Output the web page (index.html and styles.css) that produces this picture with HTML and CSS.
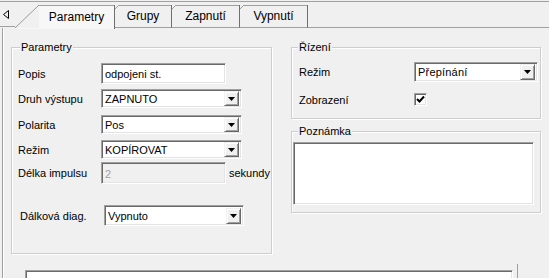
FILE: index.html
```html
<!DOCTYPE html>
<html lang="cs">
<head>
<meta charset="UTF-8">
<title>Parametry výstupu</title>
<link rel="stylesheet" href="styles.css">
</head>
<body>
    <div class="tabbar">
        <div class="tab-scroll">
            <svg width="6" height="9" viewBox="0 0 6 9"><path d="M5.5 0.5 L0.5 4.5 L5.5 8.5 Z" fill="none" stroke="#000"/></svg>
        </div>
        <div class="tab active">
            <svg class="slant" width="24" height="23" viewBox="0 0 24 23"><path d="M0 23 L24 0" stroke="#9a9a9a" fill="none"/></svg>
            <span class="tab-label">Parametry</span>
        </div>
        <div class="tab tab-grupy">Grupy</div>
        <div class="tab tab-zap">Zapnutí</div>
        <div class="tab tab-vyp">Vypnutí</div>
        <div class="tab-fill"></div>
    </div>

    <div class="page">
        <div class="columns">
            <div class="group group-params">
                <div class="group-title">Parametry</div>
                <div class="row row-popis">
                    <label>Popis</label>
                    <div class="edit edit-popis">odpojeni st.</div>
                </div>
                <div class="row row-druh">
                    <label>Druh výstupu</label>
                    <div class="combo combo-left">ZAPNUTO<span class="drop"><svg width="7" height="4" viewBox="0 0 7 4"><path d="M0 0 H7 L3.5 4 Z" fill="#000"/></svg></span></div>
                </div>
                <div class="row row-polarita">
                    <label>Polarita</label>
                    <div class="combo combo-left">Pos<span class="drop"><svg width="7" height="4" viewBox="0 0 7 4"><path d="M0 0 H7 L3.5 4 Z" fill="#000"/></svg></span></div>
                </div>
                <div class="row row-rezim">
                    <label>Režim</label>
                    <div class="combo combo-left">KOPÍROVAT<span class="drop"><svg width="7" height="4" viewBox="0 0 7 4"><path d="M0 0 H7 L3.5 4 Z" fill="#000"/></svg></span></div>
                </div>
                <div class="row row-delka">
                    <label>Délka impulsu</label>
                    <div class="edit edit-disabled">2</div>
                    <span class="unit">sekundy</span>
                </div>
                <div class="row row-diag">
                    <label>Dálková diag.</label>
                    <div class="combo combo-diag">Vypnuto<span class="drop"><svg width="7" height="4" viewBox="0 0 7 4"><path d="M0 0 H7 L3.5 4 Z" fill="#000"/></svg></span></div>
                </div>
            </div>

            <div class="right-col">
                <div class="group group-rizeni">
                    <div class="group-title">Řízení</div>
                    <div class="row row-r-rezim">
                        <label>Režim</label>
                        <div class="combo combo-right">Přepínání<span class="drop"><svg width="7" height="4" viewBox="0 0 7 4"><path d="M0 0 H7 L3.5 4 Z" fill="#000"/></svg></span></div>
                    </div>
                    <div class="row row-zobr">
                        <label>Zobrazení</label>
                        <span class="check"><svg width="9" height="9" viewBox="0 0 9 9"><path d="M1 4 L3.5 6.5 L8 1.5" fill="none" stroke="#000" stroke-width="2"/></svg></span>
                    </div>
                </div>

                <div class="group group-pozn">
                    <div class="group-title">Poznámka</div>
                    <div class="memo-note"></div>
                </div>
            </div>
        </div>

        <div class="bottom">
            <div class="memo-bottom"></div>
            <div class="vline"></div>
        </div>
    </div>
</body>
</html>
```

FILE: styles.css
```css
body{
    margin: 0;
    width: 549px;
    height: 278px;
    overflow: hidden;
    background: #f0f0f0;
    font-family: "Liberation Sans", Arial, sans-serif;
    font-size: 11px;
    color: #000;
}

/* tab strip */
.tabbar{
    display: flex;
    align-items: flex-start;
    height: 26px;
    margin-top: 1px;
    border-top: 1px solid #a0a0a0;
    font-size: 12px;
}
.tab-scroll{
    width: 15px;
    height: 25px;
    border-bottom: 1px solid #a0a0a0;
    display: flex;
    align-items: center;
    padding-left: 3px;
    box-sizing: border-box;
}
.tab{
    box-sizing: border-box;
    margin-top: 3px;
    height: 23px;
    border-right: 1px solid #6f6f6f;
    border-bottom: 1px solid #a0a0a0;
    /* top edge with a small cut corner on the left */
    background:
        linear-gradient(#a0a0a0, #a0a0a0) 3px 0 / calc(100% - 3px) 1px no-repeat,
        linear-gradient(to bottom right, transparent calc(50% - 0.7px), #a0a0a0 50%, transparent calc(50% + 0.7px)) 0 0 / 4px 4px no-repeat;
    display: flex;
    align-items: center;
    justify-content: center;
    padding-bottom: 1px;
}
.tab.active{
    width: 100px;
    height: 24px;
    border-bottom: none;
    justify-content: flex-start;
    align-items: stretch;
    padding: 0;
    background: #f7f7f7;
}
.slant{
    display: block;
    flex: none;
    background: #f0f0f0;
}
.tab-label{
    flex: 1;
    border-top: 1px solid #a0a0a0;
    display: flex;
    align-items: center;
    justify-content: center;
    padding-bottom: 2px;
}
.tab-grupy{ width: 57px; }
.tab-zap{ width: 68px; }
.tab-vyp{ width: 68px; }
.tab-fill{
    flex: 1;
    height: 25px;
    border-bottom: 1px solid #a0a0a0;
}

/* page */
.page{
    margin-left: 2px;
    height: 250px;
    border-left: 1px solid #a0a0a0;
    box-shadow: inset 1px 0 #fff;
}
.columns{
    display: flex;
    align-items: flex-start;
    padding-top: 19px;
    padding-left: 8px;
}

.group{
    border: 1px solid #cdcdcd;
    box-shadow: inset 1px 1px #fff, 1px 1px #fff;
}
.group-title{
    width: fit-content;
    height: 13px;
    line-height: 13px;
    margin-top: -7px;
    padding: 0 1px;
    background: #f0f0f0;
}

.row{
    display: flex;
    align-items: center;
}
.row label{
    flex: none;
}

/* left group */
.group-params{
    width: 253px;
    height: 205px;
    padding-left: 6px;
}
.group-params .group-title{ margin-left: 2px; }
.group-params .row label{ width: 83px; }
.row-popis{ margin-top: 9px; }
.row-druh{ margin-top: 5px; }
.row-polarita{ margin-top: 7px; }
.row-rezim{ margin-top: 6px; }
.row-delka{ margin-top: 3px; }
.row-diag{ margin-top: 21px; padding-left: 2px; }
.group-params .row-diag label{ width: 84px; }

/* controls */
.edit, .combo, .memo-note, .memo-bottom, .check{
    box-sizing: border-box;
    background: #fff;
    border-style: solid;
    border-width: 1px;
    border-color: #a0a0a0 #fff #fff #a0a0a0;
    box-shadow: inset 1px 1px #696969, inset -1px -1px #e3e3e3;
}
.edit{
    height: 21px;
    width: 125px;
    padding: 1px 3px 0;
    display: flex;
    align-items: center;
    white-space: nowrap;
}
.edit-disabled{
    height: 22px;
    background: #f0f0f0;
    color: #a0a0a0;
}
.unit{
    margin-left: 3px;
}
.combo{
    height: 19px;
    width: 141px;
    display: flex;
    align-items: center;
    padding: 0 2px 0 3px;
    white-space: nowrap;
}
.combo-diag{
    width: 140px;
    height: 21px;
}
.combo-right{
    width: 124px;
    height: 20px;
    letter-spacing: 0.2px;
}
.drop{
    margin-left: auto;
    width: 15px;
    height: 15px;
    box-sizing: border-box;
    background: #f0f0f0;
    border-style: solid;
    border-width: 1px;
    border-color: #f0f0f0 #696969 #696969 #f0f0f0;
    box-shadow: inset 1px 1px #fff, inset -1px -1px #a0a0a0;
    display: flex;
    align-items: center;
    justify-content: center;
}
.combo-diag .drop, .combo-right .drop{
    height: 16px;
}

/* right column */
.right-col{
    margin-left: 19px;
}
.group-rizeni{
    width: 241px;
    height: 70px;
    padding-left: 7px;
}
.group-rizeni .group-title{ margin-left: -1px; }
.group-rizeni .row label{ width: 115px; }
.row-r-rezim{ margin-top: 8px; }
.row-zobr{ margin-top: 11px; height: 13px; }
.check{
    width: 13px;
    height: 13px;
    display: flex;
    align-items: center;
    justify-content: center;
}

.group-pozn{
    margin-top: 12px;
    width: 248px;
    height: 80px;
}
.group-pozn .group-title{ margin-left: 6px; }
.memo-note{
    margin-top: 4px;
    margin-left: 1px;
    width: 241px;
    height: 63px;
}

/* bottom strip */
.bottom{
    display: flex;
    align-items: flex-start;
    margin-top: 10px;
}
.memo-bottom{
    margin-top: 6px;
    margin-left: 22px;
    width: 488px;
    height: 20px;
}
.vline{
    margin-left: 4px;
    height: 20px;
    border-left: 1px solid #a0a0a0;
}
```
